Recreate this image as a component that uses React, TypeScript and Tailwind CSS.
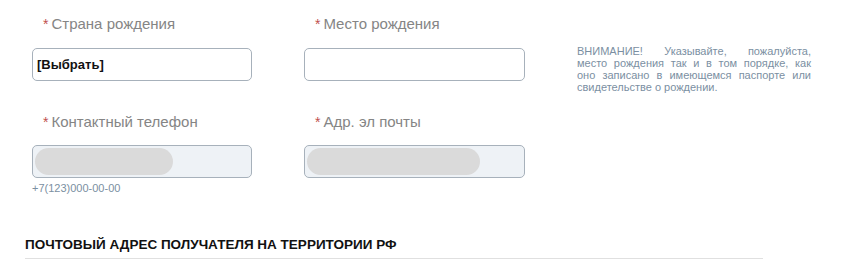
import React from 'react';

const font = { fontFamily: '"Liberation Sans", Arial, sans-serif' };

const Label: React.FC<{ text: string }> = ({ text }) => (
  <div className="h-5 leading-5 pl-[11px] text-[15px] text-[#858585]">
    <span className="text-[#c0504d] text-[14px] mr-[3px]">*</span>
    {text}
  </div>
);

const noticeLines = [
  'ВНИМАНИЕ! Указывайте, пожалуйста,',
  'место рождения так и в том порядке, как',
  'оно записано в имеющемся паспорте или',
];

const App: React.FC = () => {
  return (
    <div className="w-[847px] h-[280px] bg-white overflow-hidden" style={font}>
      <div className="flex pl-[32px] pt-[14px]">
        <div className="w-[220px]">
          <Label text="Страна рождения" />
          <div className="mt-[14px] h-[33px] border border-[#a7b1bb] rounded-[5px] bg-white flex items-center pl-[4px] text-[13px] font-bold text-[#111]">
            [Выбрать]
          </div>
          <div className="mt-[31px]">
            <Label text="Контактный телефон" />
          </div>
          <div className="mt-[13px] h-[33px] border border-[#a7b1bb] rounded-[5px] bg-[#eef2f6] p-[2px]">
            <div className="h-full w-[138px] rounded-full bg-[#dadada]" />
          </div>
          <div className="mt-[3px] h-[14px] leading-[14px] text-[11px] text-[#7b8fa2]">+7(123)000-00-00</div>
        </div>
        <div className="w-[221px] ml-[52px]">
          <Label text="Место рождения" />
          <div className="mt-[14px] h-[33px] border border-[#a7b1bb] rounded-[5px] bg-white" />
          <div className="mt-[31px]">
            <Label text="Адр. эл почты" />
          </div>
          <div className="mt-[13px] h-[33px] border border-[#a7b1bb] rounded-[5px] bg-[#eef2f6] p-[2px]">
            <div className="h-full w-[173px] rounded-full bg-[#dadada]" />
          </div>
        </div>
        <div className="w-[234px] ml-[52px] pt-[31px] text-[11px] leading-[12px] text-[#7b8fa2]">
          {noticeLines.map((line) => (
            <div key={line} className="text-justify [text-align-last:justify]">
              {line}
            </div>
          ))}
          <div>свидетельстве о рождении.</div>
        </div>
      </div>
      <div className="ml-[25px] w-[738px] mt-[42px]">
        <h2 className="text-[13.5px] leading-[16px] font-bold text-[#111]">ПОЧТОВЫЙ АДРЕС ПОЛУЧАТЕЛЯ НА ТЕРРИТОРИИ РФ</h2>
        <div className="mt-[5px] h-px bg-[#e0e0e0]" />
      </div>
    </div>
  );
};

export default App;
